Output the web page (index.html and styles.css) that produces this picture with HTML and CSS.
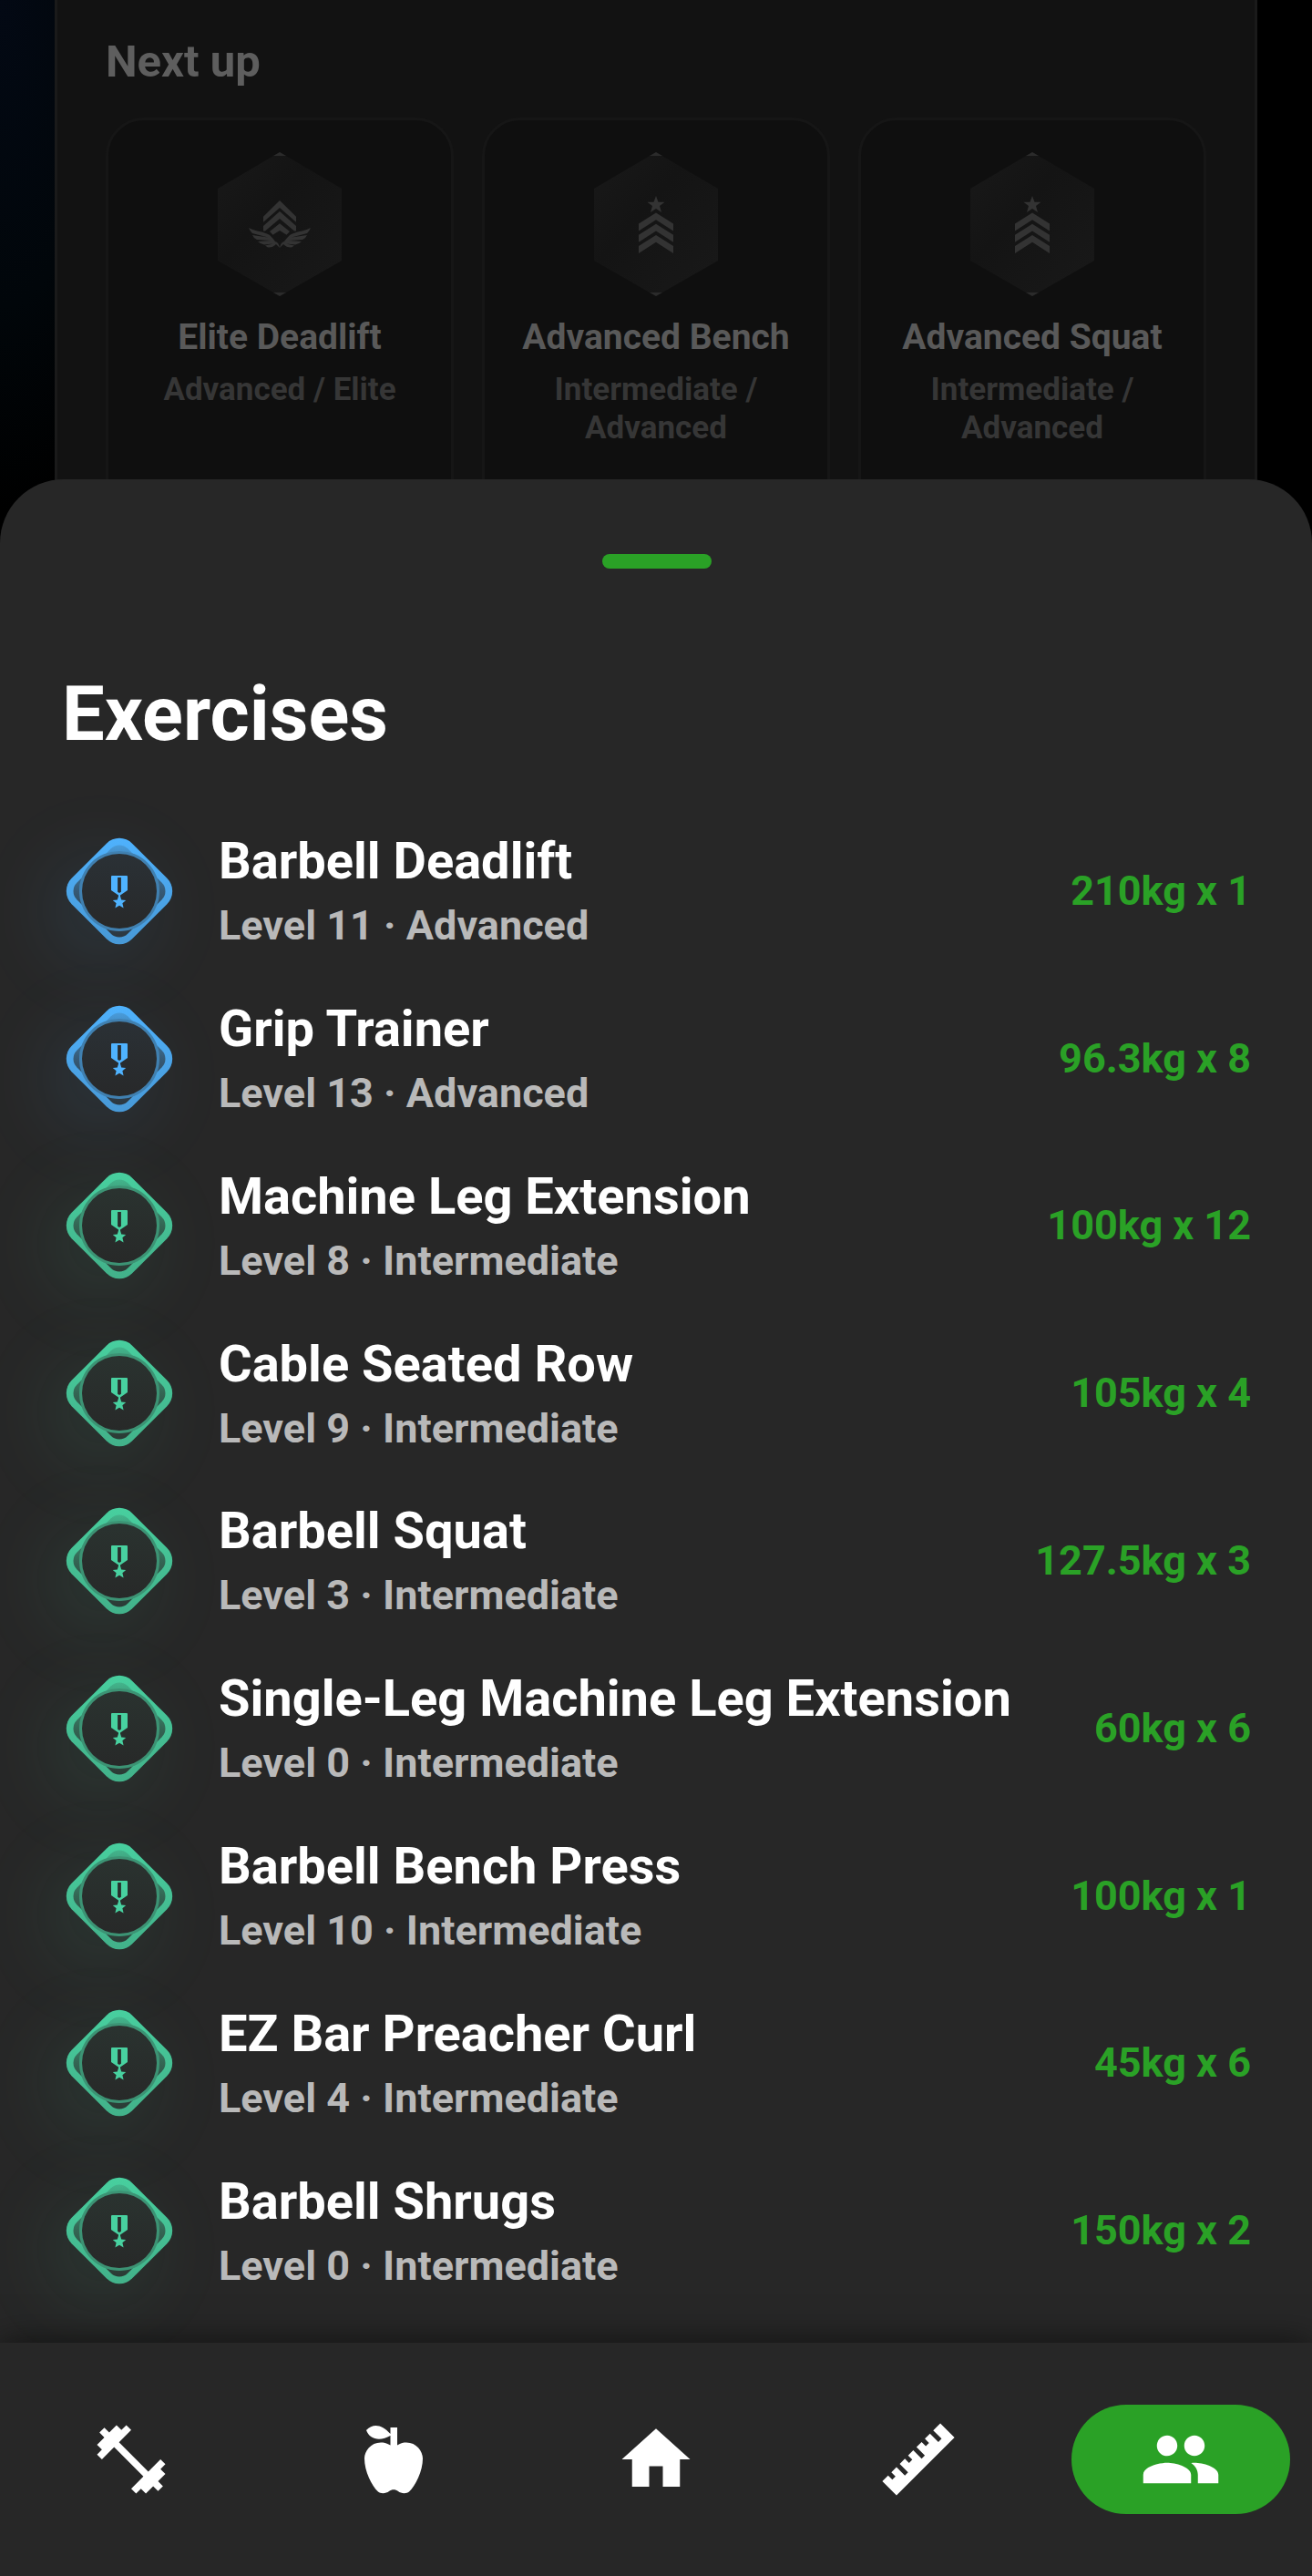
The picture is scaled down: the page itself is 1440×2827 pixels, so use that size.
FILE: index.html
```html
<!DOCTYPE html>
<html lang="en">
<head>
    <meta charset="UTF-8">
    <meta name="viewport" content="width=device-width, initial-scale=1.0">
    <title>Exercises</title>
    <link rel="stylesheet" href="styles.css">
</head>
<body>
    <!-- shared icons -->
    <svg class="sprite" aria-hidden="true">
        <defs>
            <linearGradient id="edge_shade" x1="0" y1="0" x2="1" y2="1">
                <stop offset="0" stop-color="#282828" stop-opacity="0"/>
                <stop offset="1" stop-color="#282828" stop-opacity="0.2"/>
            </linearGradient>
            <linearGradient id="inner_shade" x1="0" y1="0" x2="1" y2="1">
                <stop offset="0" stop-color="#282828" stop-opacity="0.1"/>
                <stop offset="0.5" stop-color="#282828" stop-opacity="0.6"/>
                <stop offset="1" stop-color="#282828" stop-opacity="0.9"/>
            </linearGradient>
            <linearGradient id="disc_shade" x1="0" y1="0" x2="0" y2="1">
                <stop offset="0" stop-color="#282828" stop-opacity="0.9"/>
                <stop offset="1" stop-color="#272727" stop-opacity="0.98"/>
            </linearGradient>
            <linearGradient id="hex_shade" x1="0" y1="0" x2="1" y2="1">
                <stop offset="0" stop-color="#191919"/>
                <stop offset="0.4" stop-color="#141414"/>
                <stop offset="1" stop-color="#191919"/>
            </linearGradient>
        </defs>
        <symbol id="badge" viewBox="-63 -63 126 126">
            <g transform="rotate(45)">
                <rect x="-47" y="-47" width="94" height="94" rx="20" fill="currentColor"/>
                <rect x="-47" y="-47" width="94" height="94" rx="20" fill="url(#edge_shade)"/>
                <rect x="-39.5" y="-39.5" width="79" height="79" rx="13" fill="url(#inner_shade)"/>
            </g>
            <circle r="44" fill="currentColor"/>
            <circle r="44" fill="#282828" fill-opacity="0.37"/>
            <circle r="41" fill="url(#disc_shade)"/>
            <path fill="currentColor" fill-rule="evenodd" d="M-8-17H8Q9-17 9-16V-1L1 4.5V5.5L2.2 9.5L7.2 10L3.4 13.3L4.6 18.5L0 15.8L-4.6 18.5L-3.4 13.3L-7.2 10L-2.2 9.5L-1 5.5V4.5L-9-1V-16Q-9-17-8-17ZM-1.9-15V0.8L0 2L1.9 0.8V-15Z"/>
        </symbol>
        <symbol id="hexagon" viewBox="-68 -79 136 158">
            <path fill="url(#hex_shade)" d="M0-79L68-39V40L0 79L-68 40V-39Z"/>
            <path fill="#2b2b2b" d="M0-79L7-75H-7ZM0 79L7 75H-7Z"/>
        </symbol>
        <symbol id="rank_star" viewBox="-68 -79 136 158">
            <use href="#hexagon" x="-68" y="-79" width="136" height="158"/>
            <g fill="#333">
                <path d="M0-31L2.5-24.3H9.6L4-20L6-13L0-17L-6-13L-4-20L-9.6-24.3H-2.5Z"/>
                <path d="M0-12.5L19-0.5V7.5L0-4.8L-19 7.5V-0.5Z"/>
                <path d="M0-0.2L19 11.8V19.8L0 7.5L-19 19.8V11.8Z"/>
                <path d="M0 12.1L19 24.1V32.1L0 19.8L-19 32.1V24.1Z"/>
            </g>
        </symbol>
        <symbol id="rank_wings" viewBox="-68 -79 136 158">
            <use href="#hexagon" x="-68" y="-79" width="136" height="158"/>
            <g fill="#333">
                <path d="M0-26L18-8.3V-2.3L0-18L-18-2.3V-8.3Z"/>
                <path d="M0-14L18 2V7.5H16L0-6L-16 7.5H-18V2Z"/>
                <path d="M0-0.7L11 8L7.5 11.7L0 7L-7.5 11.7L-11 8Z"/>
                <path id="wing" d="M-34 4C-27 8-17 8-11 12Q-7 16-5 19Q-1 20 0 26Q-2 24-4 22Q-8 26-13 25.5L-16 23.5L-7 21.5L-17 22.5Q-21 22-24 19L-10 18L-25 17Q-29 15-30 12L-13 14.5L-30 10Q-33 7-34 4Z"/>
                <use href="#wing" transform="scale(-1 1)"/>
            </g>
        </symbol>
    </svg>

    <main class="backdrop">
        <section class="next_up">
            <h2>Next up</h2>
            <div class="goals">
                <article class="goal">
                    <svg class="rank"><use href="#rank_wings"/></svg>
                    <h3>Elite Deadlift</h3>
                    <p>Advanced / Elite</p>
                </article>
                <article class="goal">
                    <svg class="rank"><use href="#rank_star"/></svg>
                    <h3>Advanced Bench</h3>
                    <p>Intermediate / Advanced</p>
                </article>
                <article class="goal">
                    <svg class="rank"><use href="#rank_star"/></svg>
                    <h3>Advanced Squat</h3>
                    <p>Intermediate / Advanced</p>
                </article>
            </div>
        </section>
    </main>

    <section class="sheet">
        <button class="handle" type="button" aria-label="Close"></button>
        <h1>Exercises</h1>
        <ul class="exercises">
            <li class="exercise">
                <svg class="badge advanced"><use href="#badge"/></svg>
                <div class="info">
                    <h2>Barbell Deadlift</h2>
                    <p>Level 11 · Advanced</p>
                </div>
                <span class="best">210kg x 1</span>
            </li>
            <li class="exercise">
                <svg class="badge advanced"><use href="#badge"/></svg>
                <div class="info">
                    <h2>Grip Trainer</h2>
                    <p>Level 13 · Advanced</p>
                </div>
                <span class="best">96.3kg x 8</span>
            </li>
            <li class="exercise">
                <svg class="badge intermediate"><use href="#badge"/></svg>
                <div class="info">
                    <h2>Machine Leg Extension</h2>
                    <p>Level 8 · Intermediate</p>
                </div>
                <span class="best">100kg x 12</span>
            </li>
            <li class="exercise">
                <svg class="badge intermediate"><use href="#badge"/></svg>
                <div class="info">
                    <h2>Cable Seated Row</h2>
                    <p>Level 9 · Intermediate</p>
                </div>
                <span class="best">105kg x 4</span>
            </li>
            <li class="exercise">
                <svg class="badge intermediate"><use href="#badge"/></svg>
                <div class="info">
                    <h2>Barbell Squat</h2>
                    <p>Level 3 · Intermediate</p>
                </div>
                <span class="best">127.5kg x 3</span>
            </li>
            <li class="exercise">
                <svg class="badge intermediate"><use href="#badge"/></svg>
                <div class="info">
                    <h2>Single-Leg Machine Leg Extension</h2>
                    <p>Level 0 · Intermediate</p>
                </div>
                <span class="best">60kg x 6</span>
            </li>
            <li class="exercise">
                <svg class="badge intermediate"><use href="#badge"/></svg>
                <div class="info">
                    <h2>Barbell Bench Press</h2>
                    <p>Level 10 · Intermediate</p>
                </div>
                <span class="best">100kg x 1</span>
            </li>
            <li class="exercise">
                <svg class="badge intermediate"><use href="#badge"/></svg>
                <div class="info">
                    <h2>EZ Bar Preacher Curl</h2>
                    <p>Level 4 · Intermediate</p>
                </div>
                <span class="best">45kg x 6</span>
            </li>
            <li class="exercise">
                <svg class="badge intermediate"><use href="#badge"/></svg>
                <div class="info">
                    <h2>Barbell Shrugs</h2>
                    <p>Level 0 · Intermediate</p>
                </div>
                <span class="best">150kg x 2</span>
            </li>
        </ul>
    </section>

    <nav class="tabs">
        <a href="#workouts" aria-label="Workouts">
            <svg viewBox="0 0 24 24"><path d="M20.57 14.86L22 13.43L20.57 12L17 15.57L8.43 7L12 3.43L10.57 2L9.14 3.43L7.71 2L5.57 4.14L4.14 2.71L2.71 4.14L4.14 5.57L2 7.71L3.43 9.14L2 10.57L3.43 12L7 8.43L15.57 17L12 20.57L13.43 22L14.86 20.57L16.29 22L18.43 19.86L19.86 21.29L21.29 19.86L19.86 18.43L22 16.29Z"/></svg>
        </a>
        <a href="#nutrition" aria-label="Nutrition">
            <svg viewBox="-45 -45 90 90"><path d="M-3.5-35H4V-15.5C8-18 11-18.5 14-18.5C25-18.5 32-9 32-1C32 13 24 29 17 35.5C14 38 8 37.5 5 35C2 32.5-2 32.5-5 35C-8 37.5-14 38-17 35.5C-24 29-32 13-32-1C-32-9-25-18.5-14-18.5C-11-18.5-8-18-3.5-15.5V-26C-14-20-26-21-30-32C-22-40-13-38-3.5-28Z"/></svg>
        </a>
        <a href="#home" aria-label="Home">
            <svg viewBox="0 0 24 24"><path d="M10 20V14H14V20H19V12H22L12 3L2 12H5V20Z"/></svg>
        </a>
        <a href="#measurements" aria-label="Measurements">
            <svg viewBox="-45 -45 90 90"><path transform="rotate(-45)" d="M-45-11h9v6.5h5v-6.5h8v13h5v-13h8v6.5h5v-6.5h8v13h5v-13h8v6.5h5v-6.5h8v13h5v-13h11v22h-90z"/></svg>
        </a>
        <a href="#community" class="active" aria-label="Community" aria-current="page">
            <svg viewBox="0 0 24 24"><path d="M16 11c1.66 0 2.99-1.34 2.99-3S17.66 5 16 5s-3 1.34-3 3 1.34 3 3 3zm-8 0c1.66 0 2.99-1.34 2.99-3S9.66 5 8 5 5 6.34 5 8s1.34 3 3 3zm0 2c-2.33 0-7 1.17-7 3.5V19h14v-2.5c0-2.33-4.67-3.5-7-3.5zm8 0c-.29 0-.62.02-.97.05 1.16.84 1.97 1.97 1.97 3.45V19h6v-2.5c0-2.33-4.67-3.5-7-3.5z"/></svg>
        </a>
    </nav>
</body>
</html>
```
FILE: styles.css
```css
* {
    box-sizing: border-box;
}

body {
    font-family: Roboto, sans-serif;
    font-weight: bold;
    margin: 0;
    min-height: 100vh;
    display: flex;
    flex-direction: column;
    background-color: #000;
    color: #fff;
}

h1, h2, h3, p, ul {
    margin: 0;
    padding: 0;
    font-weight: bold;
}

.sprite {
    position: absolute;
    width: 0;
    height: 0;
}

/* dimmed page behind the sheet */
.backdrop {
    padding: 0 60px;
    background: radial-gradient(ellipse 200px 560px at 0 0, #030914, #01060a 60%, #000);
}

.next_up {
    padding: 40px 53px 0;
    background-color: #121212;
    border: solid #1a1a1a;
    border-width: 0 3px;
}

.next_up h2 {
    font-size: 49px;
    line-height: 56px;
    margin-bottom: 33px;
    color: #5e5e5e;
}

.goals {
    display: grid;
    grid-template-columns: repeat(3, 1fr);
    gap: 31px;
}

.goal {
    padding: 35px 32px 102px;
    text-align: center;
    background-color: #0f0f0f;
    border: 3px solid #161616;
    border-radius: 42px;
}

.rank {
    display: block;
    width: 136px;
    height: 158px;
    margin: 0 auto 22px;
}

.goal h3 {
    font-size: 39px;
    line-height: 46px;
    margin: 0 -20px 14px;
    color: #595959;
}

.goal p {
    font-size: 35px;
    line-height: 42px;
    color: #363636;
}

.sheet {
    flex: 1;
    display: flex;
    flex-direction: column;
    position: relative;
    margin-top: -70px;
    padding: 82px 67px 31px 68px;
    background-color: #272727;
    border-radius: 70px 70px 0 0;
}

.handle {
    width: 120px;
    height: 16px;
    padding: 0;
    margin: 0 auto 110px;
    border: none;
    border-radius: 8px;
    background-color: #2aa126;
    cursor: pointer;
}

.sheet h1 {
    font-size: 83px;
    line-height: 100px;
    margin-bottom: 52px;
}

.exercises {
    flex: 1;
    display: grid;
    grid-auto-rows: 1fr;
    list-style: none;
}

.exercise {
    display: flex;
    align-items: center;
    gap: 46px;
}

.badge {
    flex: none;
    width: 126px;
    height: 126px;
    overflow: visible;
}

.advanced {
    color: #4fb3ff;
    filter: drop-shadow(-20px 20px 42px rgba(79, 179, 255, 0.12));
}

.intermediate {
    color: #48d1a0;
    filter: drop-shadow(-20px 20px 42px rgba(72, 209, 160, 0.12));
}

.info {
    flex: 1;
}

.info h2 {
    font-size: 56px;
    line-height: 66px;
    margin-bottom: 11px;
}

.info p {
    font-size: 45px;
    line-height: 54px;
    color: #b9b9b9;
}

.best {
    font-size: 45px;
    line-height: 54px;
    color: #2aa126;
    white-space: nowrap;
}

.tabs {
    position: sticky;
    bottom: 0;
    display: grid;
    grid-template-columns: repeat(5, 1fr);
    padding: 68px 0;
    background-color: #272727;
    box-shadow: 0 0 36px rgba(0, 0, 0, 0.6);
}

.tabs a {
    display: flex;
    align-items: center;
    justify-content: center;
    height: 120px;
    margin: 0 24px;
    border-radius: 60px;
}

.tabs svg {
    width: 90px;
    height: 90px;
    fill: #fff;
}

.tabs .active {
    background-color: #2aa126;
}
```
